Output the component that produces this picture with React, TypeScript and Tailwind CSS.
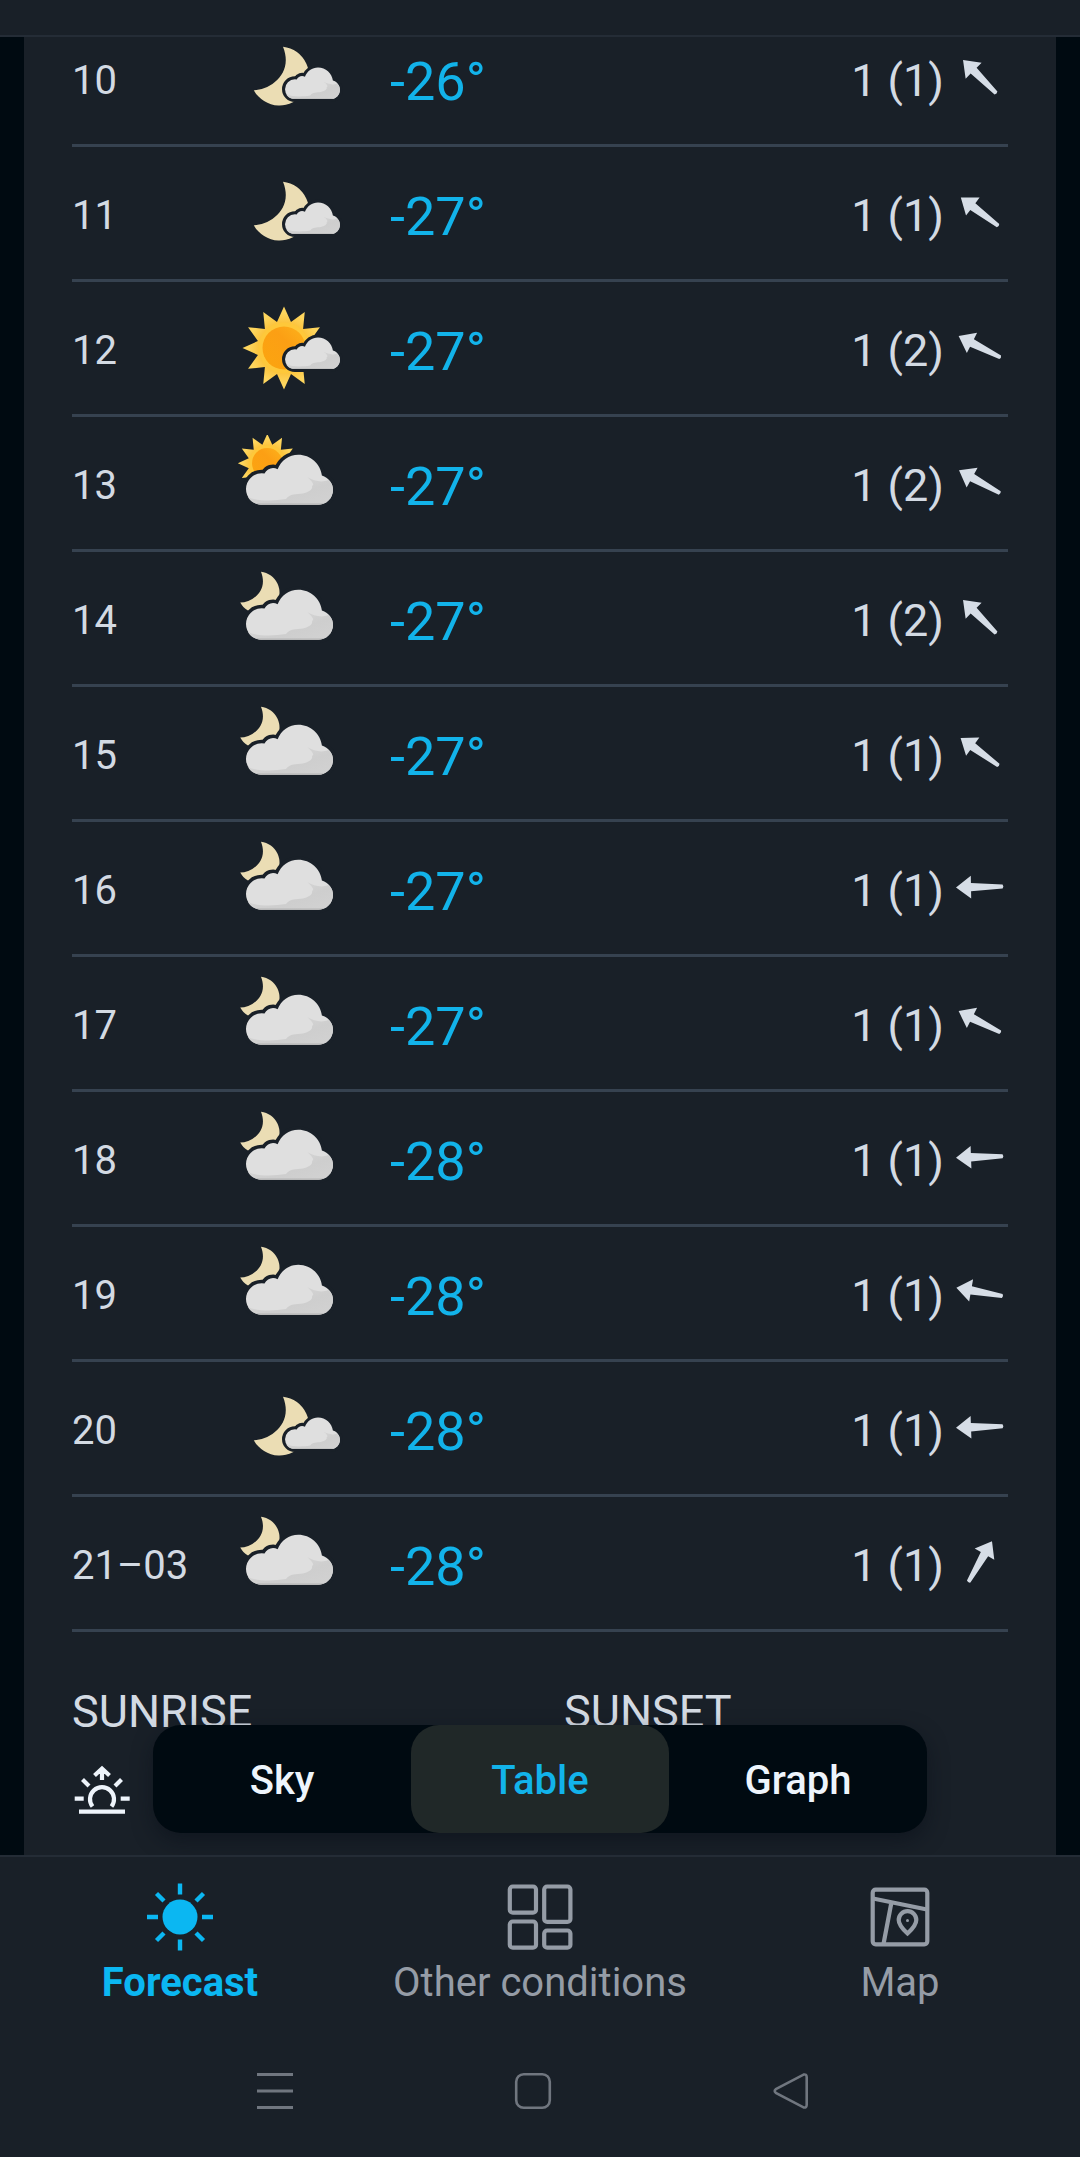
import React, { useState } from 'react';

type Sky = 'moon-small-cloud' | 'sun-small-cloud' | 'sun-cloud' | 'moon-cloud';

interface HourRow {
    hour: string;
    sky: Sky;
    temp: number;
    wind: number;
    gust: number;
    // degrees clockwise, 0 points to the left
    direction: number;
}

const hours: HourRow[] = [
    { hour: '10', sky: 'moon-small-cloud', temp: -26, wind: 1, gust: 1, direction: 45 },
    { hour: '11', sky: 'moon-small-cloud', temp: -27, wind: 1, gust: 1, direction: 37 },
    { hour: '12', sky: 'sun-small-cloud', temp: -27, wind: 1, gust: 2, direction: 27 },
    { hour: '13', sky: 'sun-cloud', temp: -27, wind: 1, gust: 2, direction: 29 },
    { hour: '14', sky: 'moon-cloud', temp: -27, wind: 1, gust: 2, direction: 45 },
    { hour: '15', sky: 'moon-cloud', temp: -27, wind: 1, gust: 1, direction: 36 },
    { hour: '16', sky: 'moon-cloud', temp: -27, wind: 1, gust: 1, direction: -1 },
    { hour: '17', sky: 'moon-cloud', temp: -27, wind: 1, gust: 1, direction: 27 },
    { hour: '18', sky: 'moon-cloud', temp: -28, wind: 1, gust: 1, direction: -2 },
    { hour: '19', sky: 'moon-cloud', temp: -28, wind: 1, gust: 1, direction: 10 },
    { hour: '20', sky: 'moon-small-cloud', temp: -28, wind: 1, gust: 1, direction: -2 },
    { hour: '21–03', sky: 'moon-cloud', temp: -28, wind: 1, gust: 1, direction: 120 },
];

const CLOUD =
    'M25.7 69.7A15.7 15.7 0 0 1 25.7 38.3L28.5 38.5C31 33.5 37 31.3 41.6 34.3C45 25.5 53 19.7 62.3 19.7C74.5 19.7 84.5 28.8 85.9 40.4C92.5 42.4 97 48 97 54.8C97 63.2 90.5 69.7 82.2 69.7Z';

// 12-pointed star around the origin
const SUN_POINTS = Array.from({ length: 24 }, (_, i) => {
    const r = i % 2 === 0 ? 41.5 : 27;
    const a = (i * Math.PI) / 12;
    return `${(r * Math.sin(a)).toFixed(2)},${(-r * Math.cos(a)).toFixed(2)}`;
}).join(' ');

const Sun: React.FC = () => (
    <g>
        <defs>
            <radialGradient id="sun-rays" gradientUnits="userSpaceOnUse" cx="0" cy="0" r="41.5">
                <stop offset="0.62" stopColor="#fcc540" />
                <stop offset="0.85" stopColor="#fed65e" />
            </radialGradient>
            <linearGradient id="sun-disc" x1="0" y1="1" x2="1" y2="0">
                <stop offset="0" stopColor="#fba50f" />
                <stop offset="0.6" stopColor="#fc9f14" />
                <stop offset="1" stopColor="#fdb31c" />
            </linearGradient>
        </defs>
        <polygon points={SUN_POINTS} fill="url(#sun-rays)" />
        <circle r="25.5" fill="#fec83a" />
        <circle r="21.5" fill="url(#sun-disc)" />
    </g>
);

const Moon: React.FC = () => (
    <path d="M47 16.7A29.5 29.5 0 1 1 17.8 60.3C34 60 58 44 47 16.7Z" fill="#ebddb4" />
);

const Cloud: React.FC<{ outline: number }> = ({ outline }) => (
    <g>
        <defs>
            <linearGradient id="cloud-shade" x1="0" y1="0" x2="1" y2="1">
                <stop offset="0" stopColor="#dcdcdc" />
                <stop offset="0.6" stopColor="#cecece" />
                <stop offset="1" stopColor="#d2d2d2" />
            </linearGradient>
        </defs>
        <path d={CLOUD} fill="#192028" stroke="#192028" strokeWidth={outline} strokeLinejoin="round" />
        <path d={CLOUD} fill="#dfdfdf" />
        <path
            d="M12 62C22 66.5 38 66 50 64C54 58.5 60 59.5 67 58.5C72 57 77 55 76 51C79 50 76 46 71 42C78 46 86 48 92 45C95.5 47 97 51 97 54.8C97 63.2 90.5 69.7 82.2 69.7H25.7C19 69.7 14 66 12 62Z"
            fill="url(#cloud-shade)"
        />
        <path d="M20 68.6C21.5 69.3 23 69.7 25.7 69.7H82.2C85 69.7 87 69.3 88 68.6Z" fill="#b4b4b4" />
    </g>
);

const SkyIcon: React.FC<{ sky: Sky }> = ({ sky }) => {
    const smallCloud = sky.endsWith('small-cloud');
    const sun = sky.startsWith('sun');
    return (
        <svg width="108" height="96" viewBox="0 0 108 96" className="block" aria-hidden="true">
            {sun && (
                <g transform={smallCloud ? 'translate(48 48)' : 'translate(31.3 28.3) scale(.71)'}>
                    <Sun />
                </g>
            )}
            {!sun && (
                <g transform={smallCloud ? undefined : 'translate(-8.4 -10.2) scale(.71)'}>
                    <Moon />
                </g>
            )}
            <g transform={smallCloud ? 'translate(42.7 25.1) scale(.631)' : undefined}>
                <Cloud outline={smallCloud ? 9.5 : 7} />
            </g>
        </svg>
    );
};

const WindArrow: React.FC<{ direction: number }> = ({ direction }) => (
    <svg width="56" height="56" viewBox="-28 -24 56 56" className="block shrink-0" aria-hidden="true">
        <path
            transform={`rotate(${direction})`}
            d="M-24 0L-9 -11.3V-4.2L22.6 -2Q24.2 0 22.6 2L-9 4.2V11.3Z"
            fill="#d6dde6"
        />
    </svg>
);

const SunriseIcon: React.FC = () => (
    <svg width="60" height="54" viewBox="72 1763 60 54" fill="none" stroke="#eef4fb" strokeWidth="4.2" aria-hidden="true">
        <path d="M92.5 1806.5A12 12 0 1 1 111.5 1806.5" />
        <path d="M79 1811.7H125M74.7 1798.7H83.7M120.7 1798.7H129.7M82.5 1779.5L89 1786M121.5 1779.5L115 1786M102 1780V1769M94.5 1775.5L102 1768.5L109.5 1775.5" />
    </svg>
);

const ForecastIcon: React.FC = () => (
    <svg width="72" height="72" viewBox="-36 -36 72 72" aria-hidden="true">
        <circle r="17.5" fill="currentColor" />
        <path
            d="M0 -33.5V-22.5M0 22.5V33.5M-33 0H-22M22 0H33M-23.5 -23.5L-16 -16M23.5 -23.5L16 -16M-23.5 23.5L-16 16M23.5 23.5L16 16"
            stroke="currentColor"
            strokeWidth="4.4"
        />
    </svg>
);

const ConditionsIcon: React.FC = () => (
    <svg width="72" height="72" viewBox="0 0 72 72" fill="none" stroke="currentColor" strokeWidth="4.2" aria-hidden="true">
        <rect x="5.8" y="5.5" width="26.2" height="26.2" rx="3" />
        <rect x="5.8" y="40.5" width="26.2" height="26.2" rx="3" />
        <rect x="40.2" y="5.5" width="26.2" height="35.4" rx="3" />
        <rect x="40.2" y="49.5" width="26.2" height="17.2" rx="3" />
    </svg>
);

const MapIcon: React.FC = () => (
    <svg width="72" height="72" viewBox="0 0 72 72" fill="none" stroke="currentColor" strokeWidth="4.2" aria-hidden="true">
        <rect x="8.7" y="8.7" width="54.6" height="54.6" rx="3" />
        <path d="M9 17.5L63 28.5M27.5 21L19.5 63" />
        <path d="M43.5 52.5C38 47.5 34.7 43.5 34.7 39A8.8 8.8 0 0 1 52.3 39C52.3 43.5 49 47.5 43.5 52.5Z" />
        <circle cx="43.5" cy="39.5" r="1.5" fill="currentColor" stroke="none" />
    </svg>
);

const tabs = [
    { id: 'forecast', label: 'Forecast', Icon: ForecastIcon },
    { id: 'conditions', label: 'Other conditions', Icon: ConditionsIcon },
    { id: 'map', label: 'Map', Icon: MapIcon },
];

const views = ['Sky', 'Table', 'Graph'];

const App: React.FC = () => {
    const [view, setView] = useState('Table');
    const [tab, setTab] = useState('forecast');

    return (
        <div className="flex h-screen flex-col overflow-hidden bg-[#000a11] font-[Roboto,sans-serif] text-[#d3dae3]">
            <header className="h-[37px] shrink-0 border-b-2 border-[#242c36] bg-[#192028]" />

            <main className="relative min-h-0 flex-1 overflow-hidden px-6">
                <div className="flow-root h-full bg-[#192028] px-12">
                    <table className="-mt-[25px] w-full border-separate border-spacing-0">
                        <tbody>
                            {hours.map((row) => (
                                <tr key={row.hour} className="h-[135px] *:border-b-3 *:border-[#364250] *:p-0">
                                    <th scope="row" className="w-[164px] text-left text-[40px] font-normal whitespace-nowrap">
                                        <span className="block pt-1.5">{row.hour}</span>
                                    </th>
                                    <td className="w-[154px]">
                                        <SkyIcon sky={row.sky} />
                                    </td>
                                    <td className="text-[54px] text-[#12b3ea]">
                                        <span className="block pt-1.5">{row.temp}°</span>
                                    </td>
                                    <td className="text-[45px]">
                                        <div className="flex items-center justify-end gap-2 pt-1.5">
                                            <span>{row.wind} ({row.gust})</span>
                                            <WindArrow direction={row.direction} />
                                        </div>
                                    </td>
                                </tr>
                            ))}
                        </tbody>
                    </table>

                    <div className="grid grid-cols-2 gap-12 pt-[52px] text-[45px] leading-[56px]">
                        <section>
                            <h2>SUNRISE</h2>
                            <div className="pt-[23px]">
                                <SunriseIcon />
                            </div>
                        </section>
                        <section>
                            <h2>SUNSET</h2>
                        </section>
                    </div>
                </div>

                <div className="absolute right-[153px] bottom-[22px] left-[153px] grid grid-cols-3 rounded-[28px] bg-[#000a11] shadow-[0_8px_20px_rgba(8,14,24,0.5)]">
                    {views.map((name) => (
                        <button
                            key={name}
                            type="button"
                            aria-pressed={view === name}
                            onClick={() => setView(name)}
                            className={`h-[108px] rounded-[28px] pt-1 text-[40px] font-medium ${view === name ? 'bg-[#202828] text-[#12b3ea]' : 'text-[#eef5fc]'}`}
                        >
                            {name}
                        </button>
                    ))}
                </div>
            </main>

            <nav className="grid shrink-0 grid-cols-3 border-t-2 border-[#242c36] bg-[#192028] pt-6">
                {tabs.map(({ id, label, Icon }) => (
                    <button
                        key={id}
                        type="button"
                        onClick={() => setTab(id)}
                        className={`flex flex-col items-center gap-1 text-[40px] leading-[52px] ${tab === id ? 'font-bold text-[#0bb7f2]' : 'text-[#959ca6]'}`}
                    >
                        <Icon />
                        {label}
                    </button>
                ))}
            </nav>

            <footer className="grid h-[148px] shrink-0 grid-cols-3 items-center justify-items-center bg-[#192028] pt-4 pr-40 pl-[146px] text-[#70767f]">
                <button type="button" aria-label="Recent apps">
                    <svg width="44" height="44" viewBox="0 0 44 44" className="block" stroke="currentColor" strokeWidth="3">
                        <path d="M4 5.5H40M4 22H40M4 38.5H40" />
                    </svg>
                </button>
                <button type="button" aria-label="Home">
                    <svg width="44" height="44" viewBox="0 0 44 44" className="block" fill="none" stroke="currentColor" strokeWidth="2.6">
                        <rect x="5.2" y="5.2" width="33.6" height="33.6" rx="7.5" />
                    </svg>
                </button>
                <button type="button" aria-label="Back">
                    <svg width="44" height="44" viewBox="0 0 44 44" className="block" fill="none" stroke="currentColor" strokeWidth="2.6">
                        <path d="M6.8 20.2L34.5 5.6Q37.5 4.8 37.7 8V36Q37.5 39.2 34.5 38.4L6.8 23.8Q4.6 22 6.8 20.2Z" />
                    </svg>
                </button>
            </footer>
        </div>
    );
};

export default App;
